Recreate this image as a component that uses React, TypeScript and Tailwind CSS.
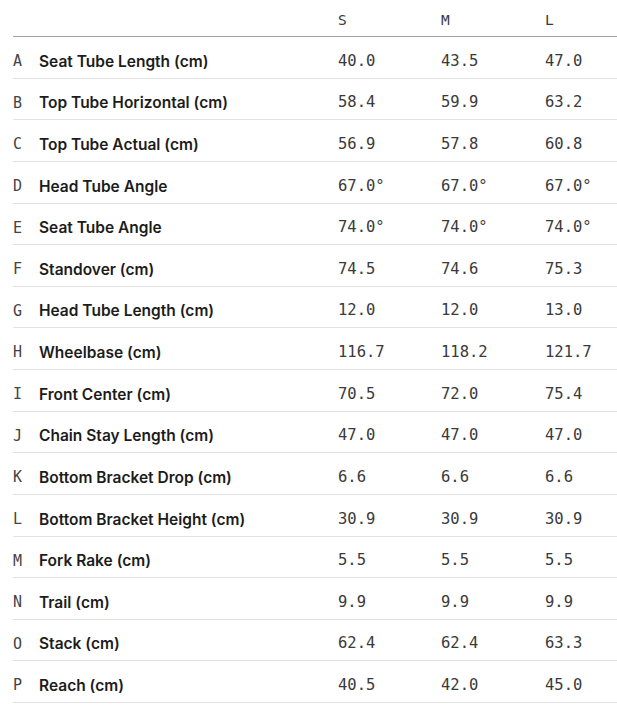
import React from "react";

const rows: [string, string, string, string, string][] = [
  ["A", "Seat Tube Length (cm)", "40.0", "43.5", "47.0"],
  ["B", "Top Tube Horizontal (cm)", "58.4", "59.9", "63.2"],
  ["C", "Top Tube Actual (cm)", "56.9", "57.8", "60.8"],
  ["D", "Head Tube Angle", "67.0°", "67.0°", "67.0°"],
  ["E", "Seat Tube Angle", "74.0°", "74.0°", "74.0°"],
  ["F", "Standover (cm)", "74.5", "74.6", "75.3"],
  ["G", "Head Tube Length (cm)", "12.0", "12.0", "13.0"],
  ["H", "Wheelbase (cm)", "116.7", "118.2", "121.7"],
  ["I", "Front Center (cm)", "70.5", "72.0", "75.4"],
  ["J", "Chain Stay Length (cm)", "47.0", "47.0", "47.0"],
  ["K", "Bottom Bracket Drop (cm)", "6.6", "6.6", "6.6"],
  ["L", "Bottom Bracket Height (cm)", "30.9", "30.9", "30.9"],
  ["M", "Fork Rake (cm)", "5.5", "5.5", "5.5"],
  ["N", "Trail (cm)", "9.9", "9.9", "9.9"],
  ["O", "Stack (cm)", "62.4", "62.4", "63.3"],
  ["P", "Reach (cm)", "40.5", "42.0", "45.0"],
];

const mono = "font-['DejaVu_Sans_Mono',monospace]";
const grid = "grid grid-cols-[26px_299px_103px_104px_1fr] items-center";

export default function App() {
  return (
    <div className="w-[617px] h-[719px] bg-white pl-[13px]">
      <div className={`${grid} h-[37px] border-b border-[#a3a3a3] pt-[5px] ${mono} text-[14.5px] text-[#3a3a3a]`}>
        <div />
        <div />
        <div>S</div>
        <div>M</div>
        <div>L</div>
      </div>
      {rows.map(([k, label, s, m, l]) => (
        <div key={k} className={`${grid} h-[41.625px] border-b border-[#e2e2e2] pt-[8px]`}>
          <div className={`${mono} text-[15px] text-[#444]`}>{k}</div>
          <div className="font-['Inter',sans-serif] font-semibold text-[15.5px] text-[#1c1c1c]">{label}</div>
          <div className={`${mono} text-[15.5px] text-[#3a3a3a]`}>{s}</div>
          <div className={`${mono} text-[15.5px] text-[#3a3a3a]`}>{m}</div>
          <div className={`${mono} text-[15.5px] text-[#3a3a3a]`}>{l}</div>
        </div>
      ))}
    </div>
  );
}
